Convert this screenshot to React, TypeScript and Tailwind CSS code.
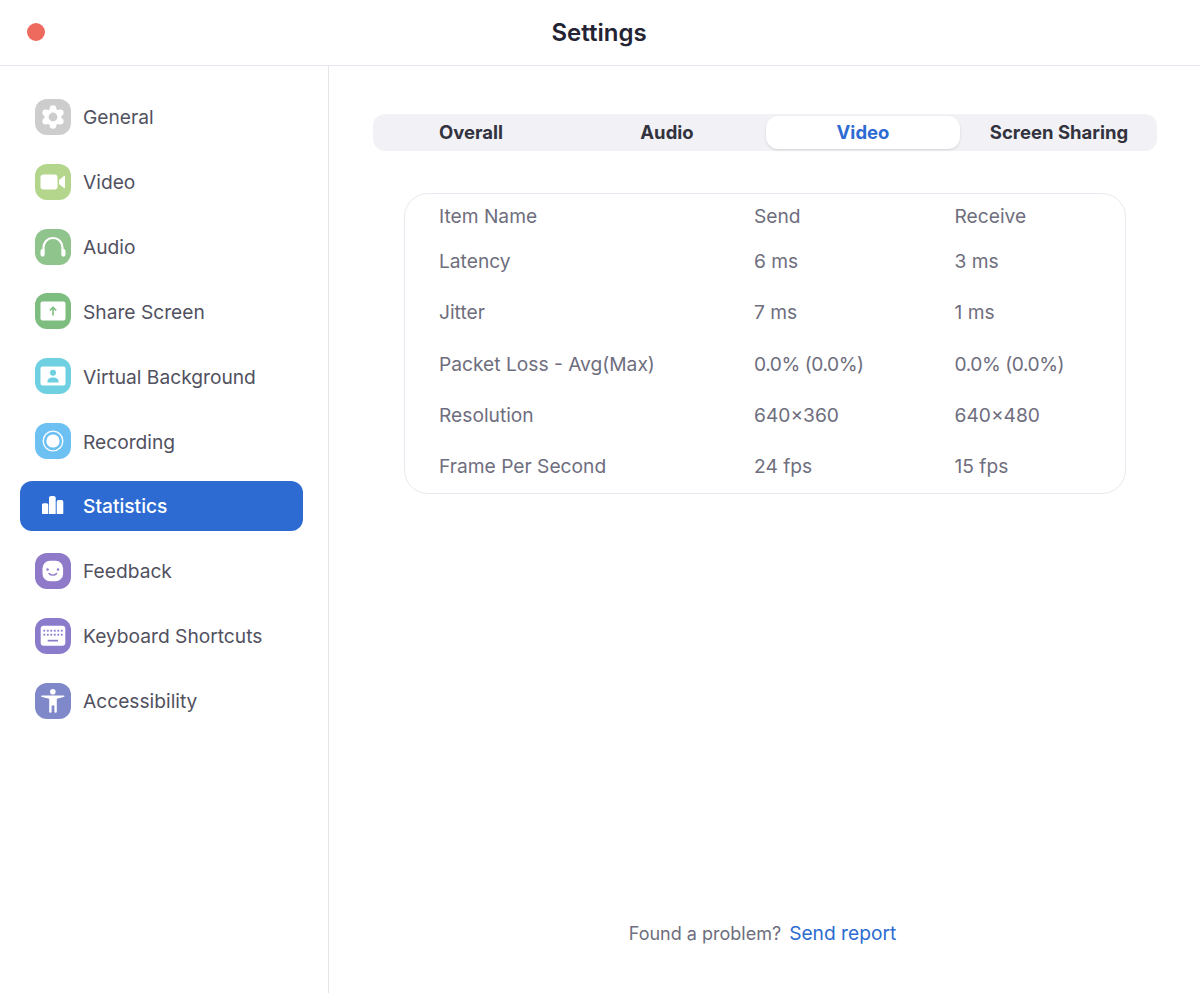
import type { ReactNode } from 'react'

const font = { fontFamily: 'Inter, "Liberation Sans", sans-serif' }

const GearIcon = () => {
  const lobes = [90, 30, -30, -90, -150, 150].map((deg) => ({
    x: 18 + 8.4 * Math.cos((deg * Math.PI) / 180),
    y: 18 + 8.4 * Math.sin((deg * Math.PI) / 180),
  }))
  return (
    <svg viewBox="0 0 36 36" className="w-9 h-9">
      <circle cx="18" cy="18" r="8.6" fill="#fff" />
      {lobes.map((l) => (
        <circle key={`${l.x}-${l.y}`} cx={l.x} cy={l.y} r="3.3" fill="#fff" />
      ))}
      <circle cx="18" cy="18" r="4.4" fill="#cdcdcd" />
    </svg>
  )
}

const VideoIcon = () => (
  <svg viewBox="0 0 36 36" className="w-9 h-9">
    <rect x="5.5" y="10.5" width="17" height="15" rx="3" fill="#fff" />
    <path d="M24 16l5-4c.5-.4 1-.1 1 .5v11c0 .6-.5.9-1 .5l-5-4z" fill="#fff" />
  </svg>
)

const AudioIcon = () => (
  <svg viewBox="0 0 36 36" className="w-9 h-9">
    <path d="M8.5 22v-3.5a9.5 9.5 0 0 1 19 0V22" fill="none" stroke="#fff" strokeWidth="2.2" />
    <rect x="5.5" y="20" width="4.2" height="7.7" rx="2.1" fill="#fff" />
    <rect x="26.3" y="20" width="4.2" height="7.7" rx="2.1" fill="#fff" />
  </svg>
)

const ShareIcon = () => (
  <svg viewBox="0 0 36 36" className="w-9 h-9">
    <rect x="5.5" y="8.5" width="25" height="19" rx="2" fill="#fff" />
    <path d="M18 22.5v-8M14.8 17.5 18 14.3l3.2 3.2" fill="none" stroke="#7dbd7f" strokeWidth="1.6" />
  </svg>
)

const BackgroundIcon = () => (
  <svg viewBox="0 0 36 36" className="w-9 h-9">
    <rect x="5.5" y="8.5" width="25" height="19" rx="2" fill="#fff" />
    <circle cx="18" cy="14.8" r="3" fill="#6fd0e2" />
    <path d="M12.5 24.5V23c0-2 2.5-3.5 5.5-3.5s5.5 1.5 5.5 3.5v1.5z" fill="#6fd0e2" />
  </svg>
)

const RecordIcon = () => (
  <svg viewBox="0 0 36 36" className="w-9 h-9">
    <circle cx="18" cy="18" r="9.8" fill="none" stroke="#fff" strokeWidth="1.3" />
    <circle cx="18" cy="18" r="6.6" fill="#fff" />
  </svg>
)

const StatsIcon = () => (
  <svg viewBox="0 0 36 36" className="w-9 h-9">
    <path
      fill="#fff"
      d="M7 17c0-1 .7-1.7 1.7-1.7h2.9c1 0 1.7.7 1.7 1.7v9H8c-.6 0-1-.4-1-1zM14 10c0-1.2.9-2 2-2h2.7c1.1 0 2 .8 2 2v16H14zM21.7 14c0-1.1.8-2 2-2h2.900c1 0 1.700.9 1.700 2v11c0 .6-.4 1-1 1h-5.600z"
    />
  </svg>
)

const FeedbackIcon = () => (
  <svg viewBox="0 0 36 36" className="w-9 h-9">
    <rect x="7.5" y="7.7" width="20.6" height="20.6" rx="7.5" fill="#fff" />
    <circle cx="12.6" cy="16.5" r="1.2" fill="#8f79c9" />
    <circle cx="23" cy="16.5" r="1.2" fill="#8f79c9" />
    <path d="M14 20.5c1.8 2.2 5.8 2.2 7.6 0" fill="none" stroke="#8f79c9" strokeWidth="1.4" strokeLinecap="round" />
  </svg>
)

const KeyboardIcon = () => {
  const keys = [9.3, 12.8, 16.3, 19.8, 23.3, 26.8]
  return (
    <svg viewBox="0 0 36 36" className="w-9 h-9">
      <rect x="5.7" y="7.7" width="24.6" height="20" rx="3" fill="#fff" />
      <g fill="#8b7ccb">
        {keys.map((x) => (
          <rect key={`top-${x}`} x={x - 0.9} y="11.8" width="1.8" height="1.8" />
        ))}
        {keys.map((x) => (
          <rect key={`mid-${x}`} x={x - 0.9} y="15.8" width="1.8" height="1.8" />
        ))}
        <rect x="12.7" y="21.8" width="10.3" height="1.7" />
      </g>
    </svg>
  )
}

const AccessIcon = () => (
  <svg viewBox="0 0 36 36" className="w-9 h-9">
    <circle cx="17.8" cy="8.7" r="2.8" fill="#fff" />
    <path
      fill="#fff"
      d="M7 12.5h21.6c.5 0 .9.3.9.8s-.4.8-.9.8l-6.8 1.7V29c0 .5-.4.8-.9.8h-.6c-.5 0-.9-.3-.9-.8v-6.500h-2.800V29c0 .5-.4.8-.9.8h-.6c-.5 0-.9-.3-.9-.8V15.800L7 14.100c-.5 0-.9-.3-.9-.8s.4-.8.9-.8z"
    />
  </svg>
)

const navItems: { label: string; bg: string; icon: ReactNode; active?: boolean }[] = [
  { label: 'General', bg: 'bg-[#cdcdcd]', icon: <GearIcon /> },
  { label: 'Video', bg: 'bg-[#b4d68c]', icon: <VideoIcon /> },
  { label: 'Audio', bg: 'bg-[#8fc48d]', icon: <AudioIcon /> },
  { label: 'Share Screen', bg: 'bg-[#7dbd7f]', icon: <ShareIcon /> },
  { label: 'Virtual Background', bg: 'bg-[#6fd0e2]', icon: <BackgroundIcon /> },
  { label: 'Recording', bg: 'bg-[#6cc0f2]', icon: <RecordIcon /> },
  { label: 'Statistics', bg: '', icon: <StatsIcon />, active: true },
  { label: 'Feedback', bg: 'bg-[#8f79c9]', icon: <FeedbackIcon /> },
  { label: 'Keyboard Shortcuts', bg: 'bg-[#8b7ccb]', icon: <KeyboardIcon /> },
  { label: 'Accessibility', bg: 'bg-[#7f88c9]', icon: <AccessIcon /> },
]

const tabs = ['Overall', 'Audio', 'Video', 'Screen Sharing']

const rows = [
  ['Latency', '6 ms', '3 ms'],
  ['Jitter', '7 ms', '1 ms'],
  ['Packet Loss - Avg(Max)', '0.0% (0.0%)', '0.0% (0.0%)'],
  ['Resolution', '640×360', '640×480'],
  ['Frame Per Second', '24 fps', '15 fps'],
]

export default function App() {
  return (
    <div className="w-[1200px] h-[993px] bg-white flex flex-col overflow-hidden" style={font}>
      {/* Title bar */}
      <div className="h-[66px] shrink-0 border-b border-[#e6e6ee] flex items-center justify-center relative pr-[2px]">
        <div className="absolute left-[27px] top-[23px] w-[18px] h-[18px] rounded-full bg-[#ee6a5f]" />
        <span className="text-[24px] font-semibold text-[#232333]">Settings</span>
      </div>

      <div className="flex flex-1 min-h-0">
        {/* Sidebar */}
        <nav className="w-[329px] shrink-0 border-r border-[#e4e4e9] pt-[26px] px-[20px] flex flex-col gap-[15.3px]">
          {navItems.map((item) => (
            <div
              key={item.label}
              className={`w-[283px] h-[49.6px] rounded-[12px] pl-[15px] flex items-center gap-[12px] ${
                item.active ? 'bg-[#2d6bd2] text-white font-medium' : 'text-[#51515f]'
              }`}
            >
              <span className={`w-9 h-9 rounded-[12px] shrink-0 flex items-center justify-center ${item.bg}`}>
                {item.icon}
              </span>
              <span className="text-[19.2px] pt-[1.5px]">{item.label}</span>
            </div>
          ))}
        </nav>

        {/* Main panel */}
        <main className="flex-1 flex flex-col pt-[48px] pl-[44px] pr-[43px] pb-[45px]">
          <div className="h-[37px] rounded-[12px] bg-[#f2f2f6] grid grid-cols-4">
            {tabs.map((tab) => (
              <div
                key={tab}
                className={`flex items-center justify-center text-[18.5px] font-bold ${
                  tab === 'Video'
                    ? 'bg-white text-[#2d6bd2] rounded-[12px] my-[2px] mx-[1px] shadow-sm'
                    : 'text-[#33333f]'
                }`}
              >
                {tab}
              </div>
            ))}
          </div>

          <div className="mt-[42px] mx-[31px] h-[301px] border border-[#e8e8f0] rounded-[24px] pl-[34px] text-[19.2px] text-[#6e6e7e]">
            <div className="grid grid-cols-[315px_200.5px_1fr] h-[42.1px] pt-[2px] items-center">
              <span>Item Name</span>
              <span>Send</span>
              <span>Receive</span>
            </div>
            {rows.map((row) => (
              <div key={row[0]} className="grid grid-cols-[315px_200.5px_1fr] h-[51.2px] items-center">
                <span>{row[0]}</span>
                <span className={row[1].includes('%') ? 'tracking-[-0.45px]' : ''}>{row[1]}</span>
                <span className={row[2].includes('%') ? 'tracking-[-0.45px]' : ''}>{row[2]}</span>
              </div>
            ))}
          </div>

          <div className="mt-auto flex justify-center items-center gap-[8px] pr-[5px]">
            <span className="text-[18px] text-[#6e6e7e]">Found a problem?</span>
            <span className="text-[19.2px] text-[#2d6bd2]">Send report</span>
          </div>
        </main>
      </div>
    </div>
  )
}
